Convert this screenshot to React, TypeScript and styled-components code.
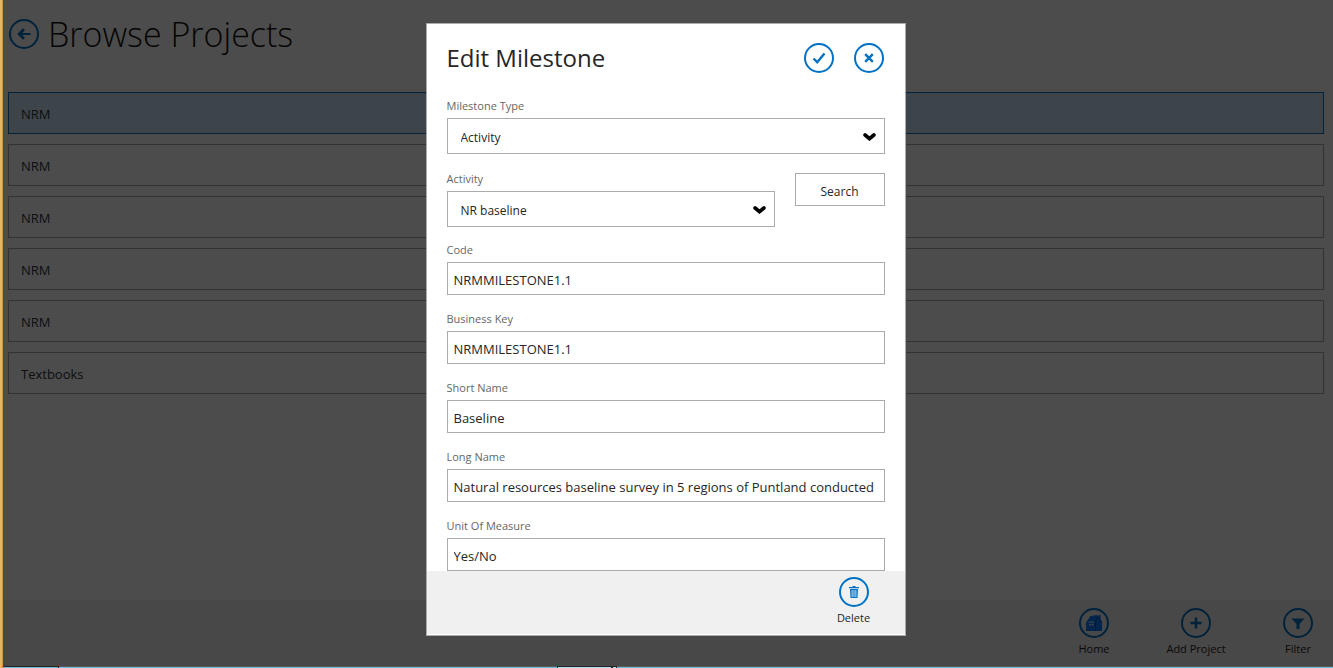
import React, { useId } from "react";
import styled, { createGlobalStyle } from "styled-components";

const ACCENT = "#0072c6";
const FONT = `"Segoe UI", "Open Sans", "Noto Sans", sans-serif`;

const GlobalStyle = createGlobalStyle`
  * { box-sizing: border-box; }
  body { margin: 0; font-family: ${FONT}; font-size: 13px; color: #262626; background: #fff; }
  button, input, select { font-family: inherit; color: inherit; border-radius: 0; }
  h1, h2 { margin: 0; font-weight: 400; }
`;

const Shell = styled.div`
  position: relative;
  display: flex;
  flex-direction: column;
  min-height: 100vh;
`;

const PageHeader = styled.header`
  display: flex;
  align-items: center;
  gap: 9px;
  height: 68px;
  padding-left: 9px;
`;

const PageTitle = styled.h1`
  font-size: 34px;
  font-weight: 300;
  line-height: 48px;
  color: #111;
`;

const ProjectList = styled.ul`
  flex: 1;
  display: flex;
  flex-direction: column;
  gap: 10px;
  margin: 0;
  padding: 24px 9px 10px 8px;
  list-style: none;
`;

const ProjectRow = styled.li<{ $selected?: boolean }>`
  height: 42px;
  padding: 0 12px;
  border: 1px solid ${(p) => (p.$selected ? ACCENT : "#ababab")};
  background: ${(p) => (p.$selected ? "#cde6f7" : "#fff")};
  font-size: 13px;
  line-height: 42px;
  color: #333;
`;

const CommandBar = styled.footer`
  display: flex;
  justify-content: flex-end;
  gap: 32px;
  height: 68px;
  padding: 8px 0 0;
  background: #f0f0f0;
`;

const Ring = styled.span`
  display: grid;
  place-items: center;
  flex: none;
  width: 30px;
  height: 30px;
  border: 2px solid ${ACCENT};
  border-radius: 50%;
  color: ${ACCENT};
`;

const IconButton = styled.button`
  display: block;
  padding: 0;
  border: 0;
  background: none;
  cursor: pointer;
`;

const CommandButton = styled.button`
  display: flex;
  flex-direction: column;
  align-items: center;
  gap: 3px;
  width: 70px;
  padding: 0;
  border: 0;
  background: none;
  font-size: 11px;
  line-height: 16px;
  white-space: nowrap;
  cursor: pointer;
`;

const Overlay = styled.div`
  position: absolute;
  inset: 0;
  display: flex;
  justify-content: center;
  padding: 23px 2px 32px 0;
  background: rgba(0, 0, 0, 0.7);
`;

const Dialog = styled.section`
  display: flex;
  flex-direction: column;
  width: 480px;
  max-width: 100%;
  border: 1px solid #ababab;
  background: #fff;
  padding-bottom: 1px;
`;

const DialogHeader = styled.header`
  display: flex;
  align-items: center;
  gap: 20px;
  height: 68px;
  padding: 0 21px 0 20px;
`;

const DialogTitle = styled.h2`
  flex: 1;
  font-size: 24px;
  line-height: 32px;
`;

const DialogBody = styled.form`
  flex: 1 1 0;
  min-height: 0;
  overflow: hidden;
  display: flex;
  flex-direction: column;
  gap: 17px;
  padding: 8px 20px 0;
`;

const DialogFooter = styled.footer`
  display: flex;
  justify-content: flex-end;
  height: 63px;
  padding: 6px 16px 0;
  background: #f0f0f0;
`;

const Field = styled.div`
  flex: 1 0 auto;
  display: flex;
  flex-direction: column;
  gap: 6px;
`;

const FieldStack = styled.div`
  display: flex;
  flex-direction: column;
  gap: 18px;
`;

const FieldRow = styled.div`
  display: flex;
  gap: 20px;
`;

const Label = styled.label`
  font-size: 11px;
  line-height: 12px;
  color: #666;
`;

const TextInput = styled.input`
  width: 100%;
  height: 33px;
  padding: 3px 6px 0;
  border: 1px solid #ababab;
  background: #fff;
  font-size: 13px;
`;

const SelectBox = styled.div`
  display: grid;
  align-items: center;
  border: 1px solid #ababab;

  > * { grid-area: 1 / 1; }
  > svg { justify-self: end; margin: 2px 8px 0 0; pointer-events: none; }
`;

const Select = styled.select`
  appearance: none;
  width: 100%;
  height: 34px;
  padding: 3px 30px 0 13px;
  border: 0;
  background: transparent;
  font-size: 12px;
`;

const SearchButton = styled.button`
  width: 90px;
  height: 33px;
  padding: 3px 0 0;
  border: 1px solid #ababab;
  background: #fff;
  font-size: 12px;
  cursor: pointer;
`;

const AccentEdge = styled.div`
  position: absolute;
  inset: 0 auto 0 0;
  width: 3px;
  background: #ebb464;
  border-right: 1px solid #c89450;
`;

const TaskEdge = styled.div`
  position: absolute;
  inset: auto 0 0 3px;
  display: flex;
  height: 2px;
  border-top: 1px solid #5c5c5c;
  background: #6cbde0;
`;

const TaskTab = styled.span<{ $width: number; $light?: boolean }>`
  width: ${(p) => p.$width}px;
  height: 2px;
  margin-top: -1px;
  border: solid #262626;
  border-width: 1px 1px 0 ${(p) => (p.$light ? "1px" : "0")};
  background: ${(p) => (p.$light ? "#a8dcec" : "#6cbde0")};
`;

const TaskGap = styled.span`
  width: 498px;
`;

const BackIcon = () => (
  <svg width="14" height="12" viewBox="0 0 14 12" fill="none" stroke="currentColor" strokeWidth="2">
    <path d="M13.500 6H2" /><path d="M7 1.200L2.200 6 7 10.800" strokeWidth="2.800" />
  </svg>
);
const CheckIcon = () => (
  <svg width="14" height="12" viewBox="0 0 14 12" fill="none" stroke="currentColor" strokeWidth="2.4">
    <path d="M1.500 6.500L5.200 10.200 12.500 1.500" />
  </svg>
);
const CloseIcon = () => (
  <svg width="10" height="10" viewBox="0 0 10 10" fill="none" stroke="currentColor" strokeWidth="2.4">
    <path d="M1.2 1.2l7.6 7.6M8.8 1.2L1.2 8.8" />
  </svg>
);
const ChevronIcon = () => (
  <svg width="13" height="8" viewBox="0 0 13 8" fill="none" stroke="#000" strokeWidth="3.6">
    <path strokeLinecap="round" d="M2.100 2L6.500 5.700 10.900 2" />
  </svg>
);
const TrashIcon = () => (
  <svg width="10" height="12" viewBox="0 0 10 12" fill="currentColor">
    <path d="M3.5 0h3v1H10v1.2H0V1h3.5z" />
    <path fillRule="evenodd" d="M1 3h8l-.5 9h-7zM2.700 4v7h.8V4zM4.600 4v7h.8V4zM6.500 4v7h.8V4z" />
  </svg>
);
const HomeIcon = () => (
  <svg width="18" height="18" viewBox="0 0 18 18">
    <path fill="#0a78ff" d="M1 8.500L5.500 2 12 1l1.500 1.500V1h2v4L17 8.500V17H1z" />
    <path fill="#d4e4ff" d="M4 7.500h4.500v4H4z" />
    <path stroke="#0a78ff" strokeWidth=".9" d="M6.200 7.500v4M4 9.500h4.500" />
    <path fill="none" stroke="#0050b0" strokeWidth=".9" d="M10.500 17V7L12.800 2.500l4 6" />
  </svg>
);
const PlusIcon = () => (
  <svg width="12" height="12" viewBox="0 0 12 12" stroke="currentColor" strokeWidth="2.400">
    <path d="M6 .5v11M.5 6h11" />
  </svg>
);
const FilterIcon = () => (
  <svg width="14" height="12" viewBox="0 0 14 12" fill="currentColor">
    <path d="M.5 1.500h13L8.500 7v5h-3V7z" />
  </svg>
);

const projects = ["NRM", "NRM", "NRM", "NRM", "NRM", "Textbooks"];

const textFields = [
  { label: "Code", value: "NRMMILESTONE1.1" },
  { label: "Business Key", value: "NRMMILESTONE1.1" },
  { label: "Short Name", value: "Baseline" },
  { label: "Long Name", value: "Natural resources baseline survey in 5 regions of Puntland conducted" },
  { label: "Unit Of Measure", value: "Yes/No" },
];

function TextField({ label, value }: { label: string; value: string }) {
  const id = useId();
  return (
    <Field>
      <Label htmlFor={id}>{label}</Label>
      <TextInput id={id} type="text" defaultValue={value} />
    </Field>
  );
}

function SelectField({ label, value }: { label: string; value: string }) {
  const id = useId();
  return (
    <Field>
      <Label htmlFor={id}>{label}</Label>
      <SelectBox>
        <Select id={id} defaultValue={value}>
          <option>{value}</option>
        </Select>
        <ChevronIcon />
      </SelectBox>
    </Field>
  );
}

function Command({ label, icon }: { label: string; icon: React.ReactNode }) {
  return (
    <CommandButton type="button">
      <Ring>{icon}</Ring>
      {label}
    </CommandButton>
  );
}

export default function App() {
  return (
    <Shell>
      <GlobalStyle />
      <PageHeader>
        <IconButton type="button" aria-label="Back"><Ring><BackIcon /></Ring></IconButton>
        <PageTitle>Browse Projects</PageTitle>
      </PageHeader>
      <ProjectList>
        {projects.map((name, i) => (
          <ProjectRow key={i} $selected={i === 0}>{name}</ProjectRow>
        ))}
      </ProjectList>
      <CommandBar>
        <Command label="Home" icon={<HomeIcon />} />
        <Command label="Add Project" icon={<PlusIcon />} />
        <Command label="Filter" icon={<FilterIcon />} />
      </CommandBar>
      <Overlay>
        <Dialog role="dialog" aria-modal="true" aria-labelledby="dialog-title">
          <DialogHeader>
            <DialogTitle id="dialog-title">Edit Milestone</DialogTitle>
            <IconButton type="button" aria-label="Save"><Ring><CheckIcon /></Ring></IconButton>
            <IconButton type="button" aria-label="Close"><Ring><CloseIcon /></Ring></IconButton>
          </DialogHeader>
          <DialogBody>
            <SelectField label="Milestone Type" value="Activity" />
            <FieldRow>
              <SelectField label="Activity" value="NR baseline" />
              <SearchButton type="button">Search</SearchButton>
            </FieldRow>
            <FieldStack>
              {textFields.map((f) => <TextField key={f.label} {...f} />)}
            </FieldStack>
          </DialogBody>
          <DialogFooter>
            <Command label="Delete" icon={<TrashIcon />} />
          </DialogFooter>
        </Dialog>
      </Overlay>
      <AccentEdge />
      <TaskEdge>
        <TaskTab $width={56} />
        <TaskGap />
        <TaskTab $width={55} $light />
        <TaskTab $width={5} $light />
      </TaskEdge>
    </Shell>
  );
}
